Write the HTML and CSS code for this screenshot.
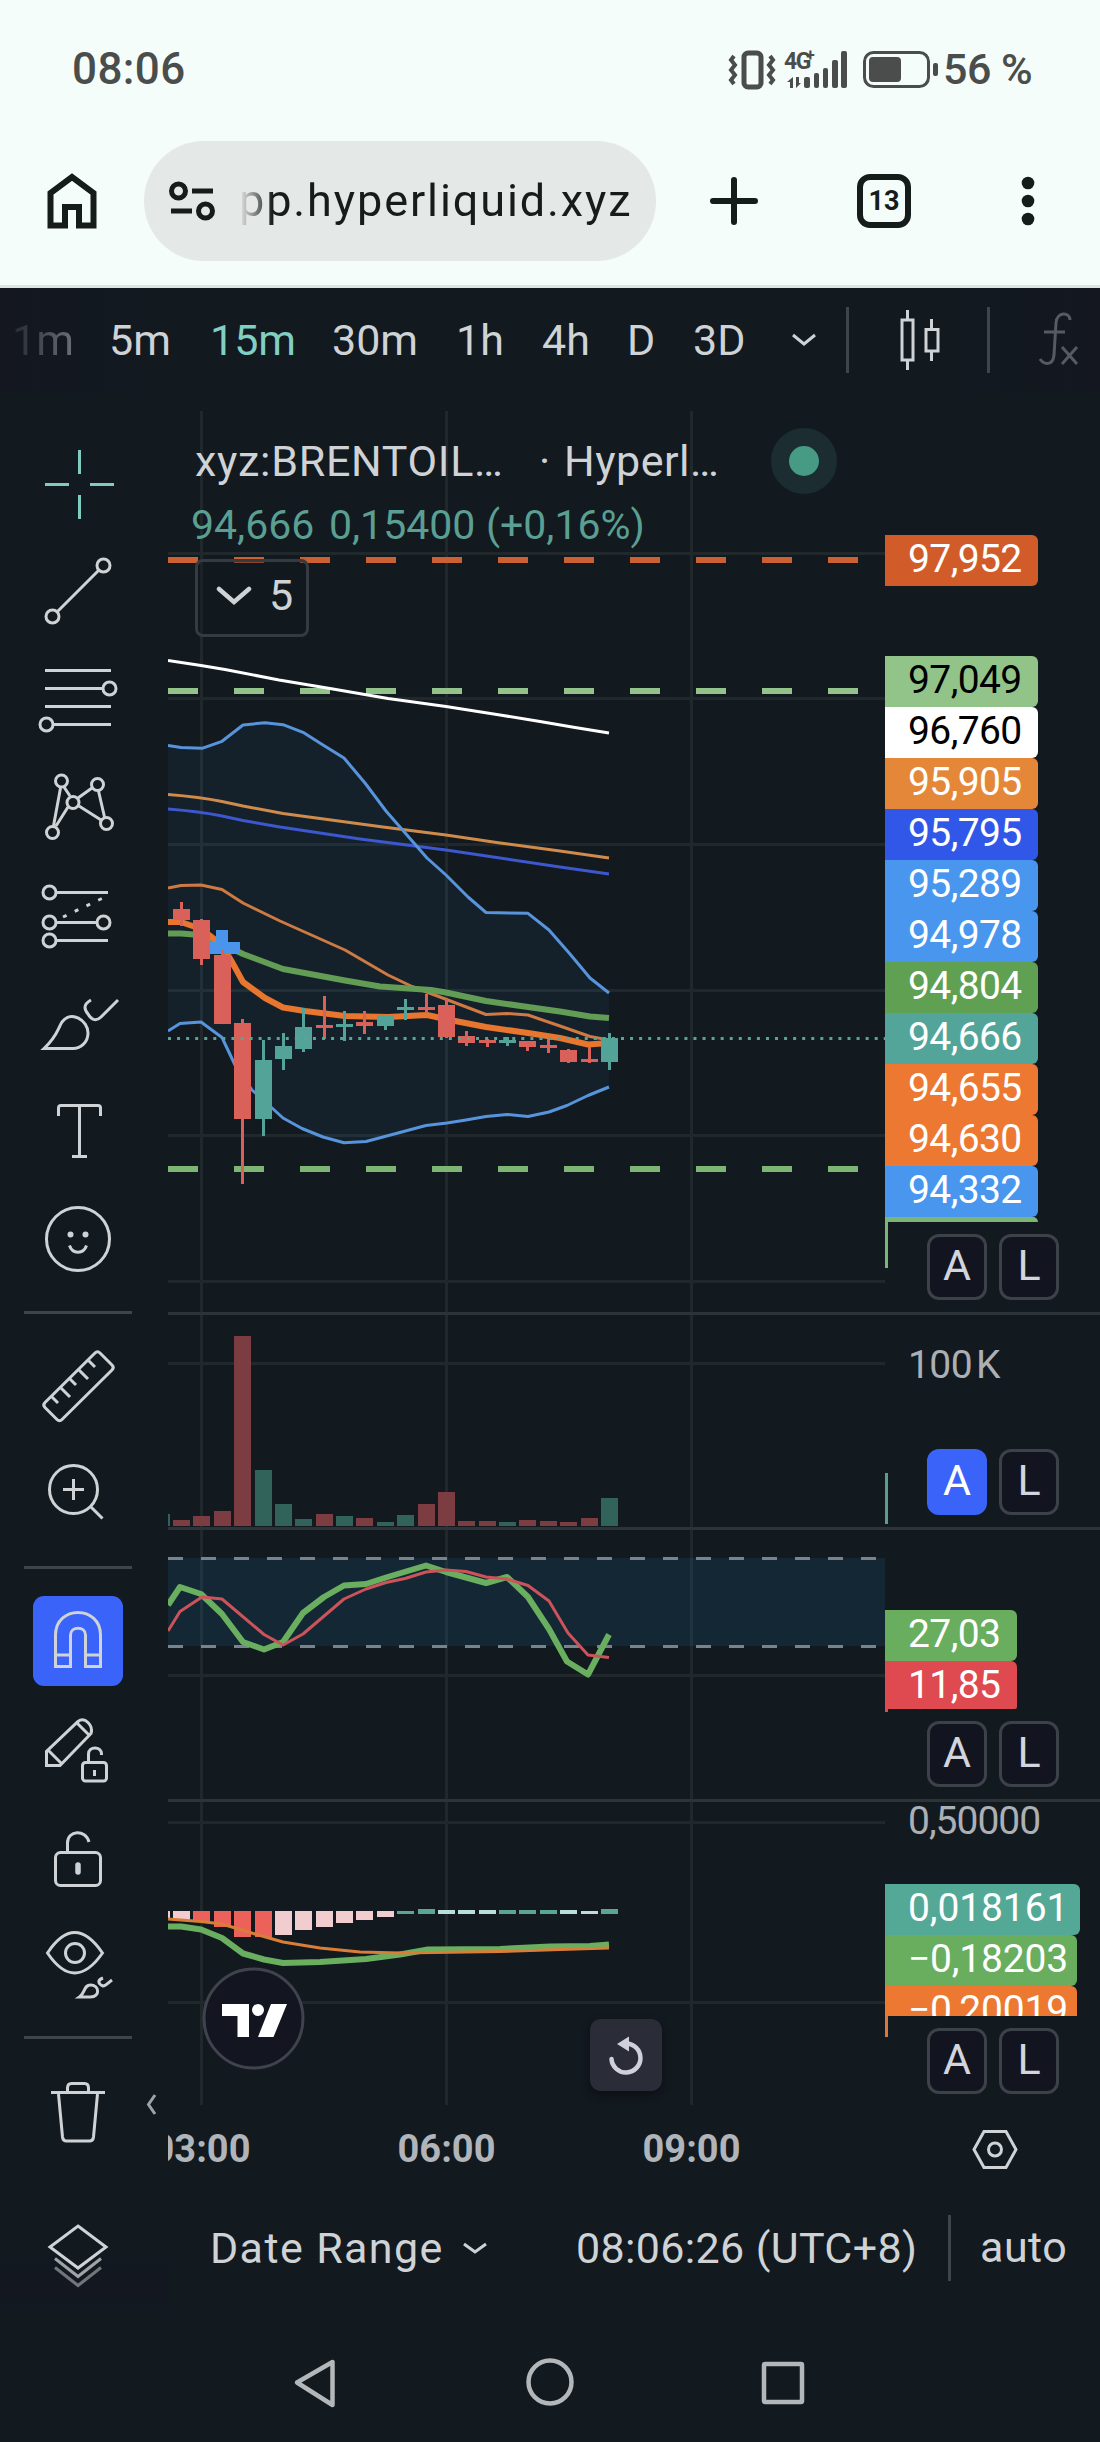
FILE: index.html
```html
<!DOCTYPE html>
<html lang="en">
<head>
<meta charset="utf-8">
<title>xyz:BRENTOIL</title>
<link rel="stylesheet" href="styles.css">
</head>
<body>
<header class="browser">
  <div class="status">
    <span class="clock">08:06</span>
    <svg class="status-icons" viewBox="725 40 215 56" width="215" height="56">
      <g fill="none" stroke="#4a4d4b" stroke-width="4">
        <rect x="744" y="52" width="17" height="34" rx="4" stroke-width="5"/>
        <path d="M734 55l-3 4 4 5-4 5 4 5-4 5 3 4M770 55l3 4-4 5 4 5-4 5 4 5-3 4" stroke-width="4"/>
        <rect x="864.500" y="51.500" width="64" height="34" rx="9" stroke-width="3"/>
      </g>
      <g fill="#4a4d4b">
        <rect x="869" y="56" width="32" height="25" rx="4"/><rect x="933" y="62" width="5" height="13" rx="2"/>
        <rect x="804" y="76" width="6" height="11" rx="2"/><rect x="814" y="72" width="5" height="15" rx="2"/><rect x="823" y="67" width="5" height="20" rx="2"/><rect x="832" y="59" width="6" height="28" rx="2"/><rect x="841" y="50" width="6" height="37" rx="2"/>
        <path d="M793 76v11h-3v-6h-3zM796 76v11l5-5h-2v-6z"/>
        <text x="784" y="68" class="net">4G</text><text x="806" y="60" class="net-plus">+</text>
      </g>
    </svg>
    <span class="battery">56 %</span>
  </div>
  <div class="address">
    <svg class="home" viewBox="42 168 60 66" width="60" height="66"><path d="M50.500 225.500V193L72 177l21.500 16v32.500H79V207H65v18.500z" fill="none" stroke="#161c1a" stroke-width="6"/></svg>
    <div class="pill">
      <svg viewBox="168 180 48 42" width="48" height="42"><g fill="none" stroke="#161c1a" stroke-width="5"><circle cx="178.500" cy="191" r="7"/><path d="M192 191h21M171 211h21"/><circle cx="205.500" cy="211" r="7"/></g></svg>
      <span class="url">pp.hyperliquid.xyz</span>
    </div>
    <svg class="plus" viewBox="706 173 56 56" width="56" height="56"><path d="M734 180v42M713 201h42" stroke="#161c1a" stroke-width="6" stroke-linecap="round"/></svg>
    <span class="tabs">13</span>
    <svg class="dots" viewBox="1018 171 20 60" width="20" height="60"><g fill="#161c1a"><circle cx="1028" cy="183" r="6.300"/><circle cx="1028" cy="201" r="6.300"/><circle cx="1028" cy="219" r="6.300"/></g></svg>
  </div>
</header>

<nav class="intervals">
  <span class="faded">1m</span><span>5m</span><span class="active">15m</span><span>30m</span><span>1h</span><span>4h</span><span>D</span><span>3D</span>
  <svg viewBox="785 300 315 84" width="315" height="84">
    <g fill="none" stroke="#cfd3d6" stroke-width="3">
      <path d="M793 337l11 9 11-9"/>
      <path d="M902 322h11v40h-11zM907.500 312v10M907.500 362v10M926 331.500h12v21.500h-12zM931.500 321v10M931.500 353v10"/>
    </g>
    <path d="M847.500 309v66M988.500 309v66" stroke="#3f454b" stroke-width="3"/>
    <path d="M1070 322c0-8-13-9-14 3l-2 32c-1 11-10 10-14 4M1044 334h21M1062 349l15 17M1077 349l-15 17" fill="none" stroke="#565a63" stroke-width="3"/>
  </svg>
</nav>

<main class="workspace">
  <aside class="tools">
    <svg class="cross" viewBox="0 430 168 108" height="108"><path d="M79.500 450v24M79.500 495v24M45 484.500h24M90 484.500h24"/></svg>
    <svg viewBox="0 538 168 106" height="106"><path d="M57 612l42-42"/><circle cx="103.500" cy="565.500" r="6.500"/><circle cx="52.500" cy="616.500" r="6.500"/></svg>
    <svg viewBox="0 644 168 108" height="108"><path d="M45 670.500h66M45 688.500h58M45 706.500h66M53 724.500h58"/><circle cx="109.500" cy="688.500" r="6.500"/><circle cx="46.500" cy="724.500" r="6.500"/></svg>
    <svg viewBox="0 752 168 108" height="108"><path d="M60.500 788l-7 38M64 787l6 9M68 807l-12 19M78 798l14-10M98.500 791l6 26M79 806l22 14"/><circle cx="61.500" cy="781" r="6"/><circle cx="97.500" cy="784.500" r="6"/><circle cx="73" cy="802.500" r="6"/><circle cx="52.500" cy="832.500" r="6"/><circle cx="106.500" cy="823.500" r="6"/></svg>
    <svg viewBox="0 860 168 108" height="108"><path d="M56 892.500h52M56 922.500h41M56 940.500h52"/><path d="M63 917l42-20" stroke-dasharray="4 9"/><circle cx="49.500" cy="892.500" r="6.500"/><circle cx="49.500" cy="922.500" r="6.500"/><circle cx="103.500" cy="922.500" r="6.500"/><circle cx="49.500" cy="940.500" r="6.500"/></svg>
    <svg viewBox="0 968 168 112" height="112"><path d="M44 1048.500C58 1035 57 1030 62 1022c9-12 26-2 26 11 0 9-7 15.500-15 15.500zM91 1000c-9 5-6 10-3 14 4 7 9 7 13 3l17-17"/></svg>
    <svg viewBox="0 1080 168 106" height="106"><path d="M58.500 1116v-8q0-2.500 2.500-2.500h37q2.500 0 2.500 2.500v8M79.500 1106v50M72 1156.500h15"/></svg>
    <svg viewBox="0 1186 168 108" height="108"><circle cx="78" cy="1239" r="31.500"/><circle cx="70.500" cy="1234.500" r="3" class="solid"/><circle cx="85.500" cy="1234.500" r="3" class="solid"/><path d="M69.500 1245.500c3 9 14 9 17 0"/></svg>
    <hr class="sep-a">
    <svg viewBox="0 1330 168 110" height="110"><path d="M95 1353q2.500-2.500 5 0l12 12q2.500 2.500 0 5l-50 49.500q-2.500 2.500-5 0l-12-12q-2.500-2.500 0-5zM89 1361l6 6M79 1370l9 9M70 1379l6 6M60 1387l10 10M51 1396l7 7"/></svg>
    <svg viewBox="0 1440 168 105" height="105"><circle cx="73.500" cy="1489.500" r="24"/><path d="M91 1507l11.500 11.500M63 1489.500h21M73.500 1479v21"/></svg>
    <hr class="sep-b">
    <svg viewBox="0 1587 168 108" height="108"><rect x="33" y="1596" width="90" height="90" rx="11" class="magnet"/><path d="M55.500 1666.500V1635c0-30 45-30 45 0v31.500h-15V1635c0-9-15-9-15 0v31.500zM55.500 1655h15M85.500 1655h15"/></svg>
    <svg viewBox="0 1695 168 108" height="108"><path d="M46.500 1765.500v-14l31.500-30q5-4 10 1t3 11l-31 32zM49 1751l12 12M77 1723l12 12"/><rect x="82.500" y="1762.500" width="24" height="18.500" rx="3"/><path d="M88.500 1762v-8c0-8 13-8 13 0v1M94.500 1770v6"/></svg>
    <svg viewBox="0 1803 168 107" height="107"><rect x="55.500" y="1852.500" width="45" height="33" rx="5"/><path d="M67.500 1852v-9c0-13 18-14 21.500-1"/><path d="M78 1865v7" stroke-width="5.500" stroke-linecap="round"/></svg>
    <svg viewBox="0 1910 168 106" height="106"><path d="M47.500 1953q27-41 55 0q-28 40-55 0z"/><circle cx="75" cy="1953" r="9.500"/><path d="M79.500 1997c6-4 4-12 11-12 9 0 10 12 0 12zM103 1978c-6 2-5 6 0 8 3 0 5-3 9-6"/></svg>
    <hr class="sep-c">
    <svg viewBox="0 2056 168 114" height="114"><path d="M51 2092.500h54M67.500 2092v-4q0-4.500 4-4.500h13q4 0 4 4.500v4M58.500 2094l4 43q.5 4 4 4h23q3.500 0 4-4l4-43"/><path d="M155 2095l-6.500 9.500 6.500 9.500" stroke="#9ea3a8"/></svg>
    <svg class="layers" viewBox="0 2170 168 140" height="140"><path d="M78 2226l28 21-28 21-28-21z"/><path d="M55 2258.500l23 18 23-18" opacity=".75"/><path d="M55 2267.500l23 18 23-18" opacity=".5"/></svg>
  </aside>

  <section class="chart">
    <div class="panes">
      <div class="plot">
        <svg id="plot" viewBox="168 400 717 1705" width="717" height="1705">
          <path d="M201.500 411V2105M446.500 411V2105M691.500 411V2105M168 553.500H885M168 698.500H885M168 844.500H885M168 990.500H885M168 1135.500H885M168 1281.500H885M168 1363.500H885M168 1675.500H885M168 1822.500H885M168 2002.500H885" class="grid"/>
          <path d="M168 1313.500H885M168 1528.500H885M168 1800.500H885" class="pane-line"/>
          <path d="M168 745.500L181 747.500 202 748.300 222 741.300 243 725 265 722.700 283 724.700 303 732.300 323 745 344 758 365 783 386 811 427 858 446 875 468 897 486 912.500 528 913.300 549 930 570 954 590 978 609 993V1087L588 1095.500 567 1105.500 549 1112 528 1116.500 507 1114.500 486 1116.500 466 1120 447 1123 426 1125.500 398 1133 366 1141.500 344 1142.700 323 1137 302 1128.500 283 1118 272 1108 252 1090 235 1065 222 1037.500 201 1022 180 1023.500 168 1031z" class="cloud"/>
          <g class="line">
            <path d="M168 560H885" stroke="#cb6032" stroke-width="6" stroke-dasharray="30 36"/>
            <path d="M168 691H885" stroke="#93c38b" stroke-width="6" stroke-dasharray="30 36"/>
            <path d="M168 1169H885" stroke="#7db574" stroke-width="6" stroke-dasharray="30 36"/>
          </g>
          <g class="line">
            <path d="M168 660.500L201 665.500 225 669.500 279 680 330 688.500 388 698.500 446 706.500 500 715 540 721.500 575 727.500 609 733" stroke="#fff"/>
            <path d="M168 794.500Q200 797 222 801.500L243 806 283 813.500 383 827 446 835 500 843 560 851 609 858" stroke="#cf8b4b"/>
            <path d="M168 809Q200 811.500 222 816L243 820.500 280 827 360 839 446 850 500 858 560 867 609 874" stroke="#3d57cf"/>
            <path d="M168 745.500L181 747.500 202 748.300 222 741.300 243 725 265 722.700 283 724.700 303 732.300 323 745 344 758 365 783 386 811 427 858 446 875 468 897 486 912.500 528 913.300 549 930 570 954 590 978 609 993" stroke="#5794dc"/>
            <path d="M168 1031L180 1023.500 201 1022 222 1037.500 235 1065 252 1090 272 1108 283 1118 302 1128.500 323 1137 344 1142.700 366 1141.500 398 1133 426 1125.500 447 1123 466 1120 486 1116.500 507 1114.500 528 1116.500 549 1112 567 1105.500 588 1095.500 609 1087" stroke="#5794dc"/>
            <path d="M168 888L181 885.500 201 885 222 889.500 243 903 280 921 345 950 388 975 412 986.500 440 997 486 1014.500 507 1013.500 528 1015 560 1026 590 1036.500 609 1040" stroke="#ce7a42"/>
            <path d="M168 933.500H181L200 935 222 944 243 954 283 969 345 980.500 380 986.500 431 990 446 992.500 486 1001 528 1007 560 1011.500 590 1016.500 609 1018" stroke="#629c55" stroke-width="6"/>
            <path d="M168 922H181L201 929 222 945 232 962 243 982 265 998 283 1007.500 305 1011 345 1016 388 1017 427 1015 450 1020 486 1027 528 1033 560 1038 588 1044.500 609 1043" stroke="#e8762f" stroke-width="6"/>
          </g>
          <path d="M216 930h12v12h12v12h-30v-12h6z" fill="#4a94ec"/>
          <g id="candles"></g>
          <path d="M168 1038.500H885" stroke="#58a597" stroke-width="3" stroke-dasharray="3 6.060"/>
          <g id="volume"></g>
          <rect x="168" y="1558" width="717" height="88" fill="#2478b4" fill-opacity=".15"/>
          <path d="M168 1558.500H885M168 1646.500H885" stroke="#7a828b" stroke-width="3" stroke-dasharray="15 18"/>
          <g class="line">
            <path d="M168 1605L180 1587 201 1594 222 1614 243 1642 264 1649.500 283 1642 303 1613 324 1597 344 1585.500 366 1584 386 1577.500 426 1565.500 446 1572 486 1583 507 1577 528 1597 549 1629 567 1661.500 588 1674.500 609 1634.500" stroke="#6aae5f" stroke-width="6"/>
            <path d="M168 1631L180 1611.500 202 1597 222 1599 264 1634.500 283 1645 303 1634 344 1599 366 1589 386 1582.500 405 1578.500 426 1572 446 1570 466 1571.500 486 1577 507 1579 528 1585.500 549 1601 568 1633 588 1655 609 1657.500" stroke="#cc535a"/>
          </g>
          <g id="hist"></g>
          <g class="line">
            <path d="M168 1926.500H181L201 1929.500 222 1938 243 1953.500 264 1959.500 283 1963 320 1962 366 1959 400 1954.500 428 1949.500 500 1949 550 1946.500 590 1946 609 1944.500" stroke="#6aae5f" stroke-width="6"/>
            <path d="M168 1919L201 1921.500 222 1924 255 1934 283 1942 320 1948 360 1952 400 1953 500 1951.500 560 1949.500 609 1948" stroke="#d97e39"/>
          </g>
          <circle cx="253.500" cy="2018.500" r="49.500" fill="#131620" stroke="#40434d" stroke-width="3"/>
          <path d="M222 2004h27v33h-11.500v-21H222zM271 2004h16l-13.500 33H258z" fill="#fff"/><circle cx="258" cy="2010" r="6" fill="#fff"/>
        </svg>
        <div class="legend">
          <div class="row"><span class="symbol">xyz:BRENTOIL…</span><span class="dot">·</span><span class="venue">Hyperl…</span><i class="live"></i></div>
          <div class="prices"><span class="p1">94,666</span><span class="p2">0,15400</span><span class="p3">(+0,16%)</span></div>
          <div class="collapse"><svg viewBox="0 0 36 20" width="36" height="20"><path d="M3 3l15 13L33 3" fill="none" stroke="#cfd3d6" stroke-width="4.500" stroke-linecap="round"/></svg>5</div>
        </div>
        <button class="reset"><svg viewBox="606 2033 40 44" width="40" height="44"><path d="M611.500 2059a14.500 14.500 0 1 0 14.500-15.500" fill="none" stroke="#cfd0dc" stroke-width="4.500" stroke-linecap="round"/><path d="M617 2044l12-7.500v15z" fill="#cfd0dc"/></svg></button>
      </div>
      <div class="axis">
        <div class="pane main">
          <b style="background:#d15c29">97,952</b>
          <b class="gap dark" style="background:#92c48a">97,049</b><b class="dark" style="background:#fff">96,760</b><b style="background:#e58739">95,905</b><b style="background:#3157e9">95,795</b><b style="background:#4996ee">95,289</b><b style="background:#4996ee">94,978</b><b style="background:#60a052">94,804</b><b style="background:#53a59a">94,666</b><b style="background:#ec7831">94,655</b><b style="background:#ec7831">94,630</b><b style="background:#4996ee">94,332</b>
          <i class="sliver"></i>
          <div class="tail tail-main"><span class="al">A</span><span class="al">L</span></div>
        </div>
        <div class="pane vol">
          <span class="tick">100<span class="unit">K</span></span>
          <div class="tail tail-vol"></div>
          <div class="pair"><span class="al on">A</span><span class="al">L</span></div>
        </div>
        <div class="pane stoch">
          <b style="background:#68ae5e">27,03</b><b class="low" style="background:#de4a4f">11,85</b>
          <i class="stub"></i>
          <div class="pair"><span class="al">A</span><span class="al">L</span></div>
        </div>
        <div class="pane macd">
          <span class="tick">0,50000</span>
          <b class="w1" style="background:#54a896">0,018161</b><b class="w2" style="background:#68ae5e">−0,18203</b><b class="w2 cut" style="background:#ec7831">−0,20019</b>
          <i class="stub"></i>
          <div class="pair"><span class="al">A</span><span class="al">L</span></div>
        </div>
      </div>
    </div>
    <div class="times">
      <div class="hours"><span>03:00</span><span>06:00</span><span>09:00</span></div>
      <svg viewBox="970 2128 50 43" width="50" height="43"><g fill="none" stroke="#cfd3d6" stroke-width="3"><path d="M984 2131.500h22l10 18-10 18h-22l-10-18z"/><circle cx="995" cy="2149.500" r="6.500"/></g></svg>
    </div>
    <footer class="range">
      <span class="date">Date Range</span>
      <svg viewBox="0 0 26 14" width="26" height="14"><path d="M2 3l11 8 11-8" fill="none" stroke="#cfd3d6" stroke-width="3"/></svg>
      <span class="utc">08:06:26 (UTC+8)</span>
      <span class="auto">auto</span>
    </footer>
  </section>
</main>

<nav class="system">
  <svg viewBox="290 2352 520 60" width="520" height="60"><g fill="none" stroke="#b4b7b9" stroke-width="4.500" stroke-linejoin="round"><path d="M297 2382.500l35.500-20.500v43z"/><circle cx="550" cy="2382" r="21.500"/><rect x="764" y="2364" width="38" height="38" rx="1"/></g></svg>
</nav>
<script src="chart.js"></script>
</body>
</html>
```
FILE: styles.css
```css
* { box-sizing: border-box; }
body { margin: 0; width: 1100px; height: 2442px; overflow: hidden; background: #12191f; color: #cfd3d6; font-family: Roboto, "Liberation Sans", sans-serif; font-size: 43px; line-height: 1; }
svg { display: block; flex: none; }
span, b { white-space: nowrap; }

.browser { height: 288px; background: #f4fdf9; border-bottom: 3px solid #dbe5e1; color: #161c1a; }
.status { display: flex; align-items: center; height: 138px; padding-left: 72px; color: #4a4d4b; font-weight: 500; }
.clock { width: 653px; font-size: 44px; letter-spacing: .400px; }
.net { font: 700 23px Roboto, sans-serif; letter-spacing: -1.500px; }
.net-plus { font: 700 16px Roboto, sans-serif; }
.battery { margin-left: 3px; letter-spacing: -.500px; }
.address { display: flex; align-items: center; height: 126px; padding-left: 42px; }
.pill { display: flex; align-items: center; width: 512px; height: 120px; margin-left: 42px; padding-left: 24px; border-radius: 60px; background: #e4e8e6; }
.url { margin-left: 23px; font-size: 45px; letter-spacing: 1.900px; color: transparent; background: linear-gradient(90deg, #e4e8e6, #161c1a 34px); background-clip: text; -webkit-background-clip: text; line-height: 60px; }
.plus { margin-left: 50px; }
.tabs { display: flex; align-items: center; justify-content: center; width: 54px; height: 54px; margin-left: 95px; border: 6px solid #161c1a; border-radius: 13px; font-size: 27px; font-weight: 700; }
.dots { margin-left: 107px; }

.intervals { display: grid; grid-template-columns: 97px 101px 122px 124px 86px 85px 66px 92px 315px; align-items: center; height: 104px; padding-left: 12px; background: linear-gradient(90deg, #141720, transparent 150px, transparent 960px, #141720); }
.faded { color: transparent; background: linear-gradient(90deg, #26292f, #6b6f75 62px); background-clip: text; -webkit-background-clip: text; }
.active { color: #80cfc2; }

.workspace { display: flex; height: 1918px; padding-top: 8px; }
.tools { width: 168px; padding-top: 30px; display: flex; flex-direction: column; }
.tools svg { width: 168px; fill: none; stroke: #cfd3d6; stroke-width: 3px; }
.tools .cross { stroke: #7fcdc1; }
.tools .solid { fill: #cfd3d6; stroke: none; }
.tools .magnet { fill: #3a63fa; stroke: none; }
.layers { background: linear-gradient(transparent 60%, #141720 85%, transparent); }
hr { width: 108px; height: 3px; margin: 17px 0 16px 24px; border: 0; background: #40454a; }
.sep-b { margin: 21px 0 18px 24px; }
.sep-c { margin: 20px 0 17px 24px; }

.chart { width: 932px; }
.panes { display: flex; height: 1705px; }
.plot { position: relative; width: 717px; }
.grid { stroke: #20282c; stroke-width: 3px; }
.pane-line { stroke: #2c343a; stroke-width: 3px; }
.cloud { fill: #3c96dc; fill-opacity: .065; }
.line { fill: none; stroke-width: 3px; stroke-linejoin: round; }
.red { fill: #da605a; }
.green { fill: #53a398; }
.vred { fill: #7c3d42; }
.vgreen { fill: #31635a; }
.h0 { fill: #f2cdcf; }
.h1 { fill: #ec625a; }
.h2 { fill: #5aa594; }
.h3 { fill: #b9dfd8; }

.legend { position: absolute; left: 25px; top: 27px; }
.row { display: flex; align-items: center; height: 68px; }
.symbol { width: 346px; padding-left: 2px; letter-spacing: .700px; }
.dot { width: 25px; }
.venue { width: 207px; letter-spacing: .500px; }
.live { width: 66px; height: 66px; border: 18px solid #1b2d31; border-radius: 50%; background: #479a83; }
.prices { display: flex; align-items: center; height: 60px; font-size: 41px; color: #5a9f92; }
.p1 { width: 138px; margin-left: -2px; }
.p2 { width: 157px; }
.collapse { display: flex; align-items: center; width: 114px; height: 78px; margin: 4px 0 0 2px; padding-left: 18px; border: 3px solid #363a41; border-radius: 8px; background: rgba(18, 25, 31, .35); gap: 17px; padding-bottom: 5px; }
.reset { position: absolute; left: 422px; top: 1619px; width: 72px; height: 72px; padding: 0; border: 0; border-radius: 11px; background: #2a2d38; box-shadow: 0 4px 10px rgba(0, 0, 0, .4); display: grid; place-items: center; }

.axis { width: 215px; }
.pane { display: flex; flex-direction: column; align-items: flex-start; border-bottom: 3px solid #2c343a; font-size: 39px; }
.pane b { display: flex; align-items: center; flex: none; width: 153px; height: 51px; padding: 0 0 3px 23px; border-radius: 0 6px 6px 0; color: #fff; font-weight: 400; letter-spacing: -.600px; }
.pane .dark { color: #000; }
.main { height: 915px; padding-top: 135px; }
.pane .gap { margin-top: 70px; }
.sliver { width: 153px; height: 5px; background: #7db574; border-radius: 0 5px 0 0; }
.tail { width: 215px; height: 46px; border-left: 3px solid #7db574; }
.tail-main { display: flex; gap: 12px; padding: 12px 0 0 39px; }
.al { display: flex; align-items: center; justify-content: center; flex: none; width: 60px; height: 66px; padding-bottom: 4px; border: 3px solid #3d4148; border-radius: 12px; background: #12151f; color: #d2d4de; font-size: 43px; }
.al.on { background: #3a63fa; border-color: #3a63fa; color: #fff; }
.pair { display: flex; gap: 12px; padding-left: 42px; }
.tick { padding-left: 23px; color: #acb0b4; letter-spacing: -.600px; }
.unit { margin-left: 4px; }
.vol { height: 215px; padding-top: 31px; }
.tail-vol { height: 51px; margin-top: 88px; border-color: #58a08a; }
.vol .pair { margin-top: -75px; }
.stoch { height: 272px; padding-top: 80px; }
.stoch b { width: 132px; }
.stoch .low { height: 48px; padding-bottom: 0; border-bottom-right-radius: 2px; }
.stub { width: 3px; height: 3px; background: #de4a4f; }
.stoch .pair { margin-top: 9px; }
.macd { height: 303px; border: 0; }
.macd .tick { height: 82px; line-height: 38px; letter-spacing: -1px; }
.macd .w1 { width: 195px; letter-spacing: -.100px; }
.macd .w2 { width: 192px; letter-spacing: -.200px; }
.macd .cut { height: 30px; align-items: flex-start; padding-top: 5px; overflow: hidden; border-bottom-right-radius: 0; }
.macd .stub { height: 21px; background: #d9773c; }
.macd .pair { margin-top: -9px; }

.times { display: flex; height: 88px; }
.hours { display: flex; width: 802px; overflow: hidden; color: #b1b5ba; font-size: 38px; font-weight: 700; line-height: 88px; text-align: center; }
.hours span { width: 245px; flex: none; }
.hours span:first-child { margin-left: -89px; }
.times svg { margin-top: 23px; }
.range { display: flex; align-items: center; height: 110px; padding-left: 42px; }
.date { width: 252px; letter-spacing: 1.400px; }
.utc { width: 371px; margin-left: 88px; letter-spacing: .350px; }
.auto { height: 66px; margin-left: 1px; padding-left: 29px; border-left: 3px solid #40454a; line-height: 64px; letter-spacing: .500px; }
.system { display: flex; justify-content: center; padding-top: 42px; }
```
FILE: chart.js
```js
// Bar centres shared by all panes
const xs = Array.from({ length: 22 }, (_, i) => 181.5 + i * 20.38);

// [colour, body top, body bottom, wick top, wick bottom]
const candles = [
  ['red', 909, 920, 902, 926], ['red', 920, 959, 919, 965], ['red', 955, 1024, 950, 1024], ['red', 1023, 1119, 1019, 1184],
  ['green', 1060, 1119, 1040, 1136], ['green', 1046, 1059, 1033, 1070], ['green', 1027, 1049, 1008, 1052], ['red', 1025, 1028, 996, 1039],
  ['green', 1024, 1027, 1011, 1041], ['red', 1022, 1026, 1011, 1034], ['green', 1015, 1026, 1015, 1030], ['green', 1007, 1010, 999, 1020],
  ['red', 1007, 1010, 994, 1013], ['red', 1005, 1037, 999, 1038], ['red', 1036, 1043, 1031, 1046], ['red', 1040, 1043, 1039, 1047],
  ['green', 1040, 1043, 1037, 1046], ['red', 1041, 1047, 1041, 1051], ['red', 1045, 1048, 1039, 1053], ['red', 1050, 1062, 1049, 1063],
  ['red', 1059, 1062, 1047, 1063], ['green', 1038, 1062, 1033, 1070]
];
const volumes = [1520, 1516, 1511, 1336, 1470, 1504, 1519, 1514, 1516, 1518, 1522, 1515, 1504, 1492, 1521, 1521, 1522, 1520, 1521, 1522, 1518, 1498];
// [palette index, top, bottom]
const hist = [
  [0, 1911, 1920], [1, 1911, 1922], [1, 1911, 1927], [1, 1911, 1937], [1, 1911, 1937], [0, 1911, 1935], [0, 1911, 1930], [0, 1911, 1927],
  [0, 1911, 1923], [0, 1911, 1920], [0, 1911, 1917], [2, 1911, 1914], [2, 1909, 1914], [3, 1910, 1914], [3, 1910, 1914], [3, 1910, 1914],
  [2, 1910, 1914], [2, 1910, 1914], [2, 1910, 1914], [3, 1910, 1914], [3, 1911, 1914], [2, 1909, 1914]
];
const bar = (c, x, y, w, y2) => `<rect class="${c}" x="${x}" y="${y}" width="${w}" height="${y2 - y}"/>`;
const left = i => Math.round(xs[i] - 8.5);

document.getElementById('candles').innerHTML = candles.map(([c, t, b, wt, wb], i) =>
  bar(c, left(i) + 7, wt, 3, wb) + bar(c, left(i), t, 17, b)).join('');
document.getElementById('volume').innerHTML = bar('vgreen', 168, 1514, 2, 1526) + volumes.map((t, i) =>
  bar(candles[i][0] === 'red' ? 'vred' : 'vgreen', left(i), t, 17, 1526)).join('');
document.getElementById('hist').innerHTML = bar('h0', 168, 1911, 2, 1919) + hist.map(([p, t, b], i) =>
  bar('h' + p, left(i), t, 17, b)).join('');
```
